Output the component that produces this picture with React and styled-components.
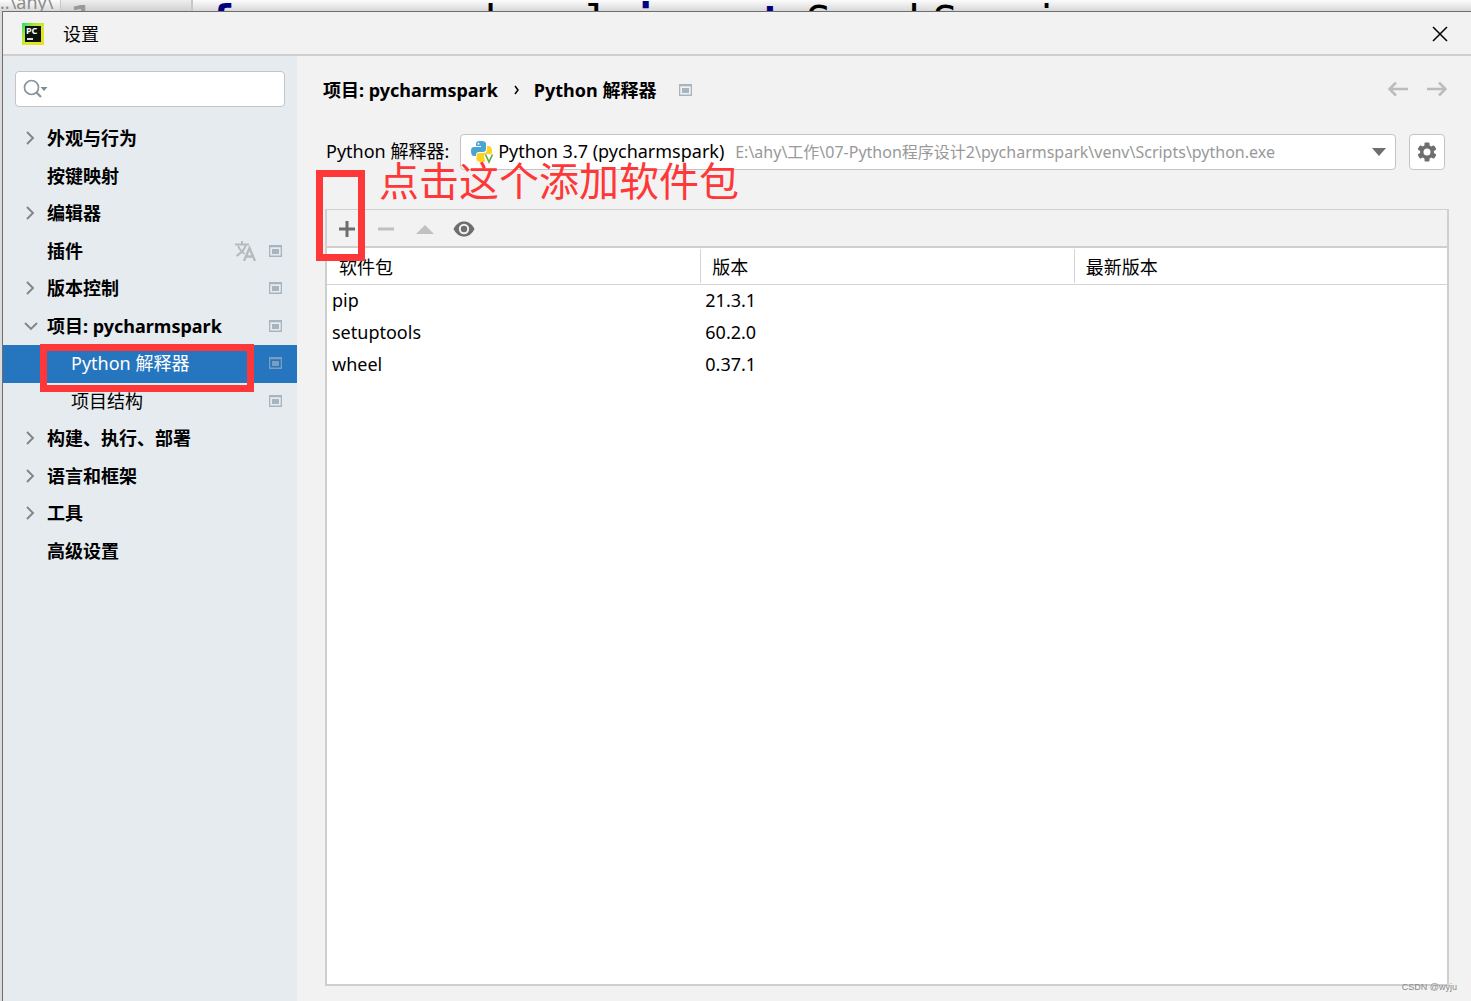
import React, { useState } from "react";
import styled, { createGlobalStyle } from "styled-components";

const GlobalStyle = createGlobalStyle`
  * {
    box-sizing: border-box;
  }
  body {
    margin: 0;
    background: #dcdcdc;
    color: #000;
    font-family: "Noto Sans", "Noto Sans CJK SC", sans-serif;
    font-size: 18px;
    line-height: 24px;
  }
  button, input, select {
    font: inherit;
    color: inherit;
  }
`;

const Page = styled.div`
  display: flex;
  flex-direction: column;
  min-height: 100vh;
  overflow: hidden;
`;

const Editor = styled.div`
  display: flex;
  height: 11px;
  overflow: hidden;
  background: linear-gradient(#fcfcfc, #d8d8d8);
  white-space: pre;
`;

const EditorTab = styled.div`
  width: 60px;
  color: #8c8c8c;
  font-size: 18px;
  line-height: 4px;
`;

const Gutter = styled.div`
  width: 133px;
  padding-left: 8px;
  border-left: 1px solid #c8c8c8;
  border-right: 2px solid #c8c8c8;
  background: linear-gradient(#efefef, #d0d0d0);
  color: #999;
  font: 42px/44px "DejaVu Sans Mono", monospace;
`;

const Code = styled.div`
  display: flex;
  gap: 22px;
  padding-left: 16px;
  font: 42px/44px "DejaVu Sans Mono", monospace;
`;

const Keyword = styled.span`
  color: #000080;
  font-weight: bold;
`;

const Dialog = styled.div`
  flex: 1;
  display: flex;
  flex-direction: column;
  margin-left: 2px;
  border-top: 1px solid #6e6e6e;
  border-left: 1px solid #6e6e6e;
  background: #f2f2f2;
`;

const TitleBar = styled.header`
  display: flex;
  align-items: center;
  gap: 19px;
  height: 44px;
  padding: 2px 19px 0;
  border-bottom: 2px solid #cfcfcf;
`;

const Title = styled.h1`
  flex: 1;
  margin: 0;
  font-size: 18px;
  font-weight: normal;
`;

const IconButton = styled.button`
  display: flex;
  align-items: center;
  justify-content: center;
  width: 24px;
  height: 24px;
  padding: 0;
  border: 0;
  background: none;
`;

const Body = styled.div`
  flex: 1;
  display: flex;
`;

const Sidebar = styled.aside`
  width: 294px;
  padding: 15px 0;
  background: #e6ebef;
`;

const SearchBox = styled.label`
  display: flex;
  align-items: center;
  height: 36px;
  margin: 0 12px 13px;
  padding: 0 7px;
  border: 1px solid #c4c4c4;
  border-radius: 4px;
  background: #fff;
`;

const SearchInput = styled.input`
  flex: 1;
  min-width: 0;
  border: 0;
  outline: 0;
  background: none;
`;

const Tree = styled.ul`
  display: grid;
  grid-template-rows: repeat(12, 1fr);
  height: 450px;
  margin: 0;
  padding: 0;
  list-style: none;
`;

const TreeRow = styled.li`
  position: relative;
  display: flex;
  align-items: center;
  padding: 0 14px 1px ${(props) => (props.$child ? 44 : 20)}px;
  background: ${(props) => (props.$selected ? "#2675bf" : "none")};
  color: ${(props) => (props.$selected ? "#fff" : "#000")};
  font-weight: ${(props) => (props.$child ? "normal" : "bold")};
`;

const ArrowSlot = styled.span`
  display: flex;
  width: 24px;
`;

const RowLabel = styled.span`
  flex: 1;
  white-space: nowrap;
`;

const RowIcons = styled.span`
  display: flex;
  align-items: center;
  gap: 12px;
`;

const Main = styled.main`
  flex: 1;
  min-width: 0;
  display: flex;
  flex-direction: column;
  padding: 22px 22px 15px 28px;
`;

const Breadcrumb = styled.nav`
  display: flex;
  align-items: center;
  gap: 15px;
  height: 24px;
  margin-left: -2px;
  font-weight: bold;
`;

const Crumb = styled.span`
  white-space: nowrap;
`;

const PageMark = styled.span`
  flex: 1;
  display: flex;
  padding-left: 8px;
`;

const InterpreterRow = styled.div`
  display: flex;
  align-items: center;
  margin: 32px 4px 39px 1px;
`;

const InterpreterLabel = styled.label`
  padding-bottom: 2px;
`;

const Combo = styled.div`
  flex: 1;
  min-width: 0;
  display: flex;
  align-items: center;
  height: 36px;
  margin: 0 13px 0 11px;
  padding: 0 9px;
  border: 1px solid #c4c4c4;
  border-radius: 4px;
  background: #fff;
`;

const ComboSelect = styled.select`
  margin: 0 10px 0 4px;
  padding: 0 0 2px;
  border: 0;
  outline: 0;
  background: none;
  appearance: none;
`;

const ComboPath = styled.span`
  flex: 1;
  overflow: hidden;
  color: #999;
  font-size: 16px;
  white-space: nowrap;
`;

const GearButton = styled(IconButton)`
  width: 36px;
  height: 36px;
  border: 1px solid #c4c4c4;
  border-radius: 4px;
  background: #fff;
`;

const Packages = styled.section`
  position: relative;
  flex: 1;
  border: 2px solid #cfcfcf;
  border-top-width: 1px;
  background: #fff;
`;

const Toolbar = styled.div`
  display: flex;
  align-items: center;
  gap: 15px;
  height: 38px;
  padding: 2px 8px 0;
  border-bottom: 2px solid #cfcfcf;
  background: #f2f2f2;
`;

const Table = styled.table`
  width: 100%;
  table-layout: fixed;
  border-collapse: collapse;
`;

const HeadCell = styled.th`
  height: 36px;
  padding: 0;
  border-bottom: 1px solid #d4d4d4;
  font-weight: normal;
  text-align: left;
`;

const HeadLabel = styled.div`
  padding: 6px 11px 4px;
  border-left: 1px solid ${(props) => (props.$first ? "transparent" : "#d4d4d4")};
`;

const Cell = styled.td`
  height: 32px;
  padding: 0 5px;
`;

// red marks drawn over the dialog
const Mark = styled.div`
  position: absolute;
  z-index: 1;
  border: 7px solid #fe3838;
  pointer-events: none;
`;

const RowMark = styled(Mark)`
  top: -1px;
  left: 37px;
  width: 214px;
  height: 48px;
`;

const AddMark = styled(Mark)`
  top: -40px;
  left: -11px;
  width: 49px;
  height: 91px;
`;

const Note = styled.div`
  position: absolute;
  top: -55px;
  left: 52px;
  color: #fe3838;
  font: 40px/48px "Noto Sans CJK SC", sans-serif;
  white-space: nowrap;
  pointer-events: none;
`;

const Watermark = styled.div`
  position: absolute;
  right: -10px;
  bottom: -10px;
  color: #8a8a8a;
  font: 9px/14px "Liberation Sans", sans-serif;
`;

function Logo() {
  return (
    <svg width="22" height="22" viewBox="0 0 22 22" aria-hidden="true">
      <defs>
        <linearGradient id="logo" x1="0" y1="0" x2="1" y2="1">
          <stop offset="0" stopColor="#21e070" />
          <stop offset="0.3" stopColor="#a5e83a" />
          <stop offset="0.6" stopColor="#dfe62c" />
          <stop offset="1" stopColor="#e6de21" />
        </linearGradient>
      </defs>
      <rect width="22" height="22" fill="url(#logo)" />
      <rect x="3" y="3" width="16" height="16" fill="#0a120a" />
      <text x="4" y="11" fill="#fff" fontFamily="Noto Sans" fontWeight="bold" fontSize="9">PC</text>
      <rect x="5" y="15" width="6" height="2" fill="#ddd" />
    </svg>
  );
}

function CloseIcon() {
  return (
    <svg width="16" height="16" viewBox="0 0 16 16" aria-hidden="true">
      <path d="M1 1l14 14M15 1L1 15" stroke="#000" strokeWidth="1.5" />
    </svg>
  );
}

function SearchIcon() {
  return (
    <svg width="26" height="20" viewBox="0 0 26 20" fill="none" stroke="#8a949c" aria-hidden="true">
      <circle cx="8.500" cy="8.500" r="7" strokeWidth="1.7" />
      <path d="M13.500 13.500l4.500 4.500" strokeWidth="2.2" />
      <path d="M17.500 8h7L21 12z" fill="#7f8b91" stroke="none" />
    </svg>
  );
}

function TreeArrow({ open }) {
  return (
    <svg width="16" height="16" viewBox="0 0 16 16" fill="none" stroke="#808588" strokeWidth="1.9" aria-hidden="true">
      {open ? <path d="M2 5l6 6 6-6" /> : <path d="M4 2l6 6-6 6" />}
    </svg>
  );
}

function ProjectIcon({ selected }) {
  const color = selected ? "#7a9fbe" : "#a9b5be";
  return (
    <svg width="14" height="12" viewBox="0 0 14 12" aria-hidden="true">
      <path d="M0 0h13v12H0zM1.300 2.300v8.300h10.400V2.300z" fill={color} fillRule="evenodd" />
      <rect x="3" y="4" width="7" height="5" fill={color} />
    </svg>
  );
}

function TranslateIcon() {
  return (
    <svg width="22" height="20" viewBox="0 0 22 20" fill="none" stroke="#b4babe" strokeWidth="2" aria-hidden="true">
      <path d="M0 3.500h14M7 0v3.500M3 5c1.500 4 4 6 6.500 8M11 3.500C10 8 6 12 1.500 15" />
      <path d="M9 20l5.500-13L20 20M11 15.500h7.500" strokeWidth="2.300" />
    </svg>
  );
}

function PythonIcon() {
  return (
    <svg width="24" height="24" viewBox="0 0 24 24" aria-hidden="true">
      <path d="M6 6V3.500C6 1.500 8 1 11 1s5 .7 5 2.700V9c0 2-1 3-3 3H9c-2 0-3 1-3 3v1H4c-2 0-3-2-3-5s1-4 3-4h7V6z" fill="#4ba5d3" />
      <path d="M17 6h1.500C20.500 6 22 8 22 11c0 1.500 0 2-.5 3L14 15l1 7H10c-2.500-.5-3.500-1-3.500-3v-3.500c0-1.500 1-2.500 2.500-2.500h5c2 0 3-1.500 3-3.500z" fill="#ffd21f" />
      <circle cx="8.500" cy="3.700" r="1" fill="#fff" />
      <path d="M15.500 14.500L19 22l3.500-7.500" fill="none" stroke="#fff" strokeWidth="4" />
      <path d="M15.500 14.500L19 22l3.500-7.500" fill="none" stroke="#5fb040" strokeWidth="1.700" />
    </svg>
  );
}

function GearIcon() {
  return (
    <svg width="20" height="20" viewBox="0 0 20 20" aria-hidden="true">
      <g fill="#6e6e6e">
        <circle cx="10" cy="10" r="7" />
        {[0, 60, 120].map((a) => (
          <rect key={a} x="7.500" y="0.500" width="5" height="19" rx="1" transform={`rotate(${a} 10 10)`} />
        ))}
      </g>
      <circle cx="10" cy="10" r="3.500" fill="#fff" />
    </svg>
  );
}

function NavArrow({ right }) {
  return (
    <svg width="20" height="16" viewBox="0 0 20 16" fill="none" stroke="#bcbcbc" strokeWidth="2.600" aria-hidden="true">
      {right ? <path d="M0 7h18M12 .5L18.500 7 12 13.500" /> : <path d="M20 7H2M8 .5L1.500 7 8 13.500" />}
    </svg>
  );
}

function EyeIcon() {
  return (
    <svg width="22" height="16" viewBox="0 0 22 16" aria-hidden="true">
      <path d="M.5 8C3 3 6.500.5 11 .5S19 3 21.500 8C19 13 15.500 15.500 11 15.500S3 13 .5 8z" fill="#6e6e6e" />
      <circle cx="11" cy="8" r="5.200" fill="#f2f2f2" />
      <circle cx="11" cy="8" r="3.200" fill="#6e6e6e" />
    </svg>
  );
}

const tree = [
  { label: "外观与行为", arrow: true },
  { label: "按键映射" },
  { label: "编辑器", arrow: true },
  { label: "插件", translate: true, project: true },
  { label: "版本控制", arrow: true, project: true },
  { label: "项目: pycharmspark", arrow: true, open: true, project: true },
  { label: "Python 解释器", child: true, selected: true, project: true },
  { label: "项目结构", child: true, project: true },
  { label: "构建、执行、部署", arrow: true },
  { label: "语言和框架", arrow: true },
  { label: "工具", arrow: true },
  { label: "高级设置" },
];

const packages = [
  { name: "pip", version: "21.3.1" },
  { name: "setuptools", version: "60.2.0" },
  { name: "wheel", version: "0.37.1" },
];

export default function App() {
  const [query, setQuery] = useState("");

  return (
    <Page>
      <GlobalStyle />
      <Editor aria-hidden="true">
        <EditorTab>..\ahy\_</EditorTab>
        <Gutter>1</Gutter>
        <Code>
          <Keyword>from</Keyword>
          <span>pyspark.sql</span>
          <Keyword>import</Keyword>
          <span>SparkSession</span>
        </Code>
      </Editor>
      <Dialog>
        <TitleBar>
          <Logo />
          <Title>设置</Title>
          <IconButton aria-label="关闭"><CloseIcon /></IconButton>
        </TitleBar>
        <Body>
          <Sidebar>
            <SearchBox>
              <SearchIcon />
              <SearchInput type="text" aria-label="搜索" value={query} onChange={(e) => setQuery(e.target.value)} />
            </SearchBox>
            <Tree>
              {tree.map((item) => (
                <TreeRow key={item.label} $child={item.child} $selected={item.selected}>
                  <ArrowSlot>{item.arrow && <TreeArrow open={item.open} />}</ArrowSlot>
                  <RowLabel>{item.label}</RowLabel>
                  <RowIcons>
                    {item.translate && <TranslateIcon />}
                    {item.project && <ProjectIcon selected={item.selected} />}
                  </RowIcons>
                  {item.selected && <RowMark />}
                </TreeRow>
              ))}
            </Tree>
          </Sidebar>
          <Main>
            <Breadcrumb>
              <Crumb>项目: pycharmspark</Crumb>
              <svg width="6" height="10" viewBox="0 0 6 10" fill="none" stroke="#000" strokeWidth="1.500" aria-hidden="true">
                <path d="M2 1l3 4-3 4" />
              </svg>
              <Crumb>Python 解释器</Crumb>
              <PageMark><ProjectIcon /></PageMark>
              <IconButton aria-label="后退"><NavArrow /></IconButton>
              <IconButton aria-label="前进"><NavArrow right /></IconButton>
            </Breadcrumb>
            <InterpreterRow>
              <InterpreterLabel htmlFor="interpreter">Python 解释器:</InterpreterLabel>
              <Combo>
                <PythonIcon />
                <ComboSelect id="interpreter">
                  <option>Python 3.7 (pycharmspark)</option>
                </ComboSelect>
                <ComboPath>E:\ahy\工作\07-Python程序设计2\pycharmspark\venv\Scripts\python.exe</ComboPath>
                <svg width="14" height="8" viewBox="0 0 14 8" aria-hidden="true">
                  <path d="M0 0h14L7 8z" fill="#6e6e6e" />
                </svg>
              </Combo>
              <GearButton aria-label="解释器设置"><GearIcon /></GearButton>
            </InterpreterRow>
            <Packages>
              <Toolbar>
                <IconButton aria-label="添加">
                  <svg width="16" height="16" aria-hidden="true"><path d="M8 0v16M0 8h16" stroke="#6e6e6e" strokeWidth="3" /></svg>
                </IconButton>
                <IconButton aria-label="移除">
                  <svg width="16" height="16" aria-hidden="true"><path d="M0 8h16" stroke="#c0c0c0" strokeWidth="3" /></svg>
                </IconButton>
                <IconButton aria-label="升级">
                  <svg width="18" height="10" aria-hidden="true"><path d="M0 10l9-9 9 9z" fill="#c0c0c0" /></svg>
                </IconButton>
                <IconButton aria-label="显示早期版本"><EyeIcon /></IconButton>
              </Toolbar>
              <Table>
                <thead>
                  <tr>
                    <HeadCell><HeadLabel $first>软件包</HeadLabel></HeadCell>
                    <HeadCell><HeadLabel>版本</HeadLabel></HeadCell>
                    <HeadCell><HeadLabel>最新版本</HeadLabel></HeadCell>
                  </tr>
                </thead>
                <tbody>
                  {packages.map((p) => (
                    <tr key={p.name}>
                      <Cell>{p.name}</Cell>
                      <Cell>{p.version}</Cell>
                      <Cell />
                    </tr>
                  ))}
                </tbody>
              </Table>
              <AddMark />
              <Note>点击这个添加软件包</Note>
              <Watermark>CSDN @wyju</Watermark>
            </Packages>
          </Main>
        </Body>
      </Dialog>
    </Page>
  );
}
